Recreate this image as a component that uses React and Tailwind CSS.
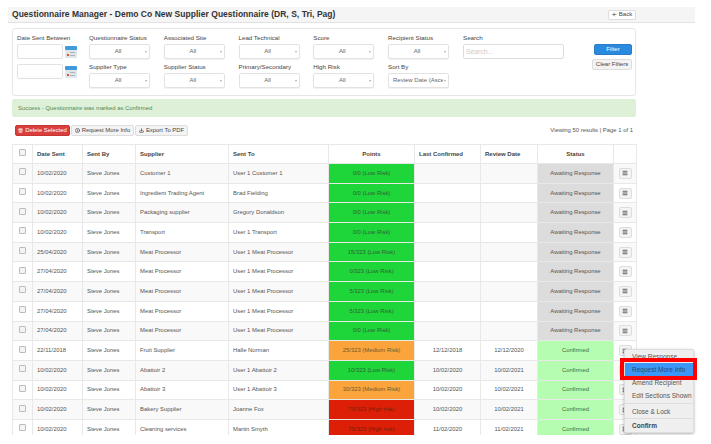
import React from "react";
import { Trash2, Info, Download, Menu, ArrowLeft } from "lucide-react";

const G = "bg-[#1fd63a]", O = "bg-[#fba43c]", R = "bg-[#dc1f06]", A = "bg-[#dcdcdc]", C = "bg-[#b5fdb0]";
const rows = [
  ["10/02/2020","Customer 1","User 1 Customer 1","0/0 (Low Risk)",G,"","","Awaiting Response"],
  ["10/02/2020","Ingredient Trading Agent","Brad Fielding","0/0 (Low Risk)",G,"","","Awaiting Response"],
  ["10/02/2020","Packaging supplier","Gregory Donaldson","0/0 (Low Risk)",G,"","","Awaiting Response"],
  ["10/02/2020","Transport","User 1 Transport","0/0 (Low Risk)",G,"","","Awaiting Response"],
  ["25/04/2020","Meat Processor","User 1 Meat Processor","15/323 (Low Risk)",G,"","","Awaiting Response"],
  ["27/04/2020","Meat Processor","User 1 Meat Processor","0/323 (Low Risk)",G,"","","Awaiting Response"],
  ["27/04/2020","Meat Processor","User 1 Meat Processor","5/323 (Low Risk)",G,"","","Awaiting Response"],
  ["27/04/2020","Meat Processor","User 1 Meat Processor","5/323 (Low Risk)",G,"","","Awaiting Response"],
  ["27/04/2020","Meat Processor","User 1 Meat Processor","0/0 (Low Risk)",G,"","","Awaiting Response"],
  ["22/11/2018","Fruit Supplier","Halle Norman","25/323 (Medium Risk)",O,"12/12/2018","12/12/2020","Confirmed"],
  ["10/02/2020","Abattoir 2","User 1 Abattoir 2","10/323 (Low Risk)",G,"10/02/2020","10/02/2021","Confirmed"],
  ["10/02/2020","Abattoir 3","User 1 Abattoir 3","30/323 (Medium Risk)",O,"10/02/2020","10/02/2021","Confirmed"],
  ["10/02/2020","Bakery Supplier","Joanne Fox","70/323 (High risk)",R,"10/02/2020","10/02/2021","Confirmed"],
  ["10/02/2020","Cleaning services","Martin Smyth","75/323 (High risk)",R,"11/02/2020","11/02/2021","Confirmed"],
];

function Sel({ label, value = "All", left }) {
  return (
    <div className="w-[61px]">
      <div className="h-[12px] text-[6.2px] leading-[12px] text-[#444] whitespace-nowrap">{label}</div>
      <div className="relative h-[15px] rounded-[2px] border border-[#e2e2e2] bg-white shadow-[0_1px_1px_rgba(0,0,0,0.06)] text-[6px] leading-[13px] text-[#666] whitespace-nowrap">
        <div className={left ? "pl-[4px] w-[54px] overflow-hidden" : "text-center pr-[3px]"}>{value}</div>
        <span className="absolute right-[2px] top-[6px] border-x-[1.5px] border-t-[2px] border-x-transparent border-t-[#aaa]" />
      </div>
    </div>
  );
}

function Cal() {
  return (
    <svg width="12" height="14" viewBox="0 0 12 14" className="shrink-0">
      <rect x="0" y="1" width="12" height="12" rx="1" fill="#dfe6ea" />
      <rect x="0" y="1" width="12" height="4" rx="1" fill="#3f9bdc" />
      <rect x="2" y="9" width="2" height="2" fill="#e0503c" />
      <rect x="5" y="7" width="5" height="1" fill="#aab4ba" />
      <rect x="5" y="10" width="5" height="1" fill="#aab4ba" />
    </svg>
  );
}

function Btn({ className = "", children }) {
  return <div className={"flex items-center justify-center gap-[2px] rounded-[2px] border whitespace-nowrap " + className}>{children}</div>;
}

const cols = [20, 50, 53, 93, 100, 86, 66, 57, 76, 23];

export default function App() {
  return (
    <div className="relative w-[711px] h-[435px] overflow-hidden bg-white pt-[7px] text-[#555]" style={{ fontFamily: '"Liberation Sans", Arial, sans-serif' }}>
      <div className="ml-[8px] w-[687px] h-[16px] flex items-center justify-between bg-[#f5f5f5] border-b border-[#e2e2e2] pl-[4px] pr-[59px]">
        <div className="text-[8.5px] font-bold tracking-[0.03px] text-[#333] whitespace-nowrap">Questionnaire Manager - Demo Co New Supplier Questionnaire (DR, S, Tri, Pag)</div>
        <Btn className="w-[28px] h-[10px] bg-white border-[#ddd] text-[6px] text-[#444]"><ArrowLeft size={5} strokeWidth={3} />Back</Btn>
      </div>

      <div className="ml-[12px] mt-[5px] w-[624px] h-[68px] rounded-[3px] border border-[#e6e6e6] flex pl-[4px] pt-[3px]">
        <div className="w-[72px] shrink-0">
          <div className="h-[12px] text-[6.2px] leading-[12px] text-[#444]">Date Sent Between</div>
          <div className="flex items-center gap-[2px]"><div className="w-[46px] h-[15px] rounded-[2px] border border-[#e2e2e2]" /><Cal /></div>
          <div className="mt-[5px] flex items-center gap-[2px]"><div className="w-[46px] h-[15px] rounded-[2px] border border-[#e2e2e2]" /><Cal /></div>
        </div>
        <div className="grid grid-cols-[61px_61px_61px_61px_61px] gap-x-[13.75px] gap-y-[2px] content-start">
          <Sel label="Questionnaire Status" /><Sel label="Associated Site" /><Sel label="Lead Technical" /><Sel label="Score" /><Sel label="Recipient Status" />
          <Sel label="Supplier Type" /><Sel label="Supplier Status" /><Sel label="Primary/Secondary" /><Sel label="High Risk" /><Sel label="Sort By" value="Review Date (Ascending)" left />
        </div>
        <div className="ml-[14px] w-[101px]">
          <div className="h-[12px] text-[6.2px] leading-[12px] text-[#444]">Search</div>
          <div className="h-[15px] rounded-[2px] border border-[#ddd] text-[6.8px] leading-[13px] pl-[2px] text-[#ccc]">Search...</div>
        </div>
        <div className="ml-[28px] w-[40px] pt-[12px] flex flex-col items-end gap-[4px]">
          <Btn className="w-[38px] h-[11px] bg-[#2a8ae0] border-[#2a7cc8] text-white text-[6px]">Filter</Btn>
          <Btn className="w-[40px] h-[11px] bg-[#f3f3f3] border-[#ddd] text-[#444] text-[6px]">Clear Filters</Btn>
        </div>
      </div>

      <div className="ml-[12px] mt-[3px] w-[624px] h-[18px] rounded-[2px] bg-[#dff0d8] pl-[6px] text-[5.9px] leading-[18px] text-[#4f8a4f]">Success - Questionnaire was marked as Confirmed</div>

      <div className="ml-[15px] mr-[78px] mt-[8px] h-[11px] flex items-center gap-[1px]">
        <Btn className="w-[55px] h-[11px] bg-[#d9403d] border-[#c93532] text-white text-[5.9px]"><Trash2 size={5} strokeWidth={3} />Delete Selected</Btn>
        <Btn className="w-[63px] h-[11px] bg-[#f4f4f4] border-[#ddd] text-[#444] text-[5.9px]"><Info size={5} strokeWidth={3} />Request More Info</Btn>
        <Btn className="w-[53px] h-[11px] bg-[#f4f4f4] border-[#ddd] text-[#444] text-[5.9px]"><Download size={5} strokeWidth={3} />Export To PDF</Btn>
        <div className="ml-auto text-[5.9px] text-[#555]">Viewing 50 results | Page 1 of 1</div>
      </div>

      <table className="ml-[12px] mt-[8px] w-[624px] table-fixed border-collapse text-[5.9px] text-[#555]">
        <colgroup>{cols.map((w, i) => <col key={i} style={{ width: w }} />)}</colgroup>
        <thead>
          <tr className="h-[19px] text-[6px] text-[#444]">
            <th className="border border-[#e8e8e8]"><div className="mx-auto -mt-[3px] w-[7px] h-[7px] rounded-[1px] border border-[#bbb] bg-[#f4f4f4]" /></th>
            <th className="border border-[#e8e8e8] text-left pl-[4px] font-bold">Date Sent</th>
            <th className="border border-[#e8e8e8] text-left pl-[4px] font-bold">Sent By</th>
            <th className="border border-[#e8e8e8] text-left pl-[4px] font-bold">Supplier</th>
            <th className="border border-[#e8e8e8] text-left pl-[4px] font-bold">Sent To</th>
            <th className="border border-[#e8e8e8] font-bold">Points</th>
            <th className="border border-[#e8e8e8] text-left pl-[4px] font-bold">Last Confirmed</th>
            <th className="border border-[#e8e8e8] text-left pl-[4px] font-bold">Review Date</th>
            <th className="border border-[#e8e8e8] font-bold">Status</th>
            <th className="border border-[#e8e8e8]" />
          </tr>
        </thead>
        <tbody>
          {rows.map((r, i) => (
            <tr key={i} className={"h-[19.7px] " + (i % 2 === 0 ? "bg-[#f9f9f9]" : "bg-white")}>
              <td className="border border-[#e8e8e8]"><div className="mx-auto -mt-[3px] w-[7px] h-[7px] rounded-[1px] border border-[#bbb] bg-[#f4f4f4]" /></td>
              <td className="border border-[#e8e8e8] pl-[4px]">{r[0]}</td>
              <td className="border border-[#e8e8e8] pl-[4px]">Steve Jones</td>
              <td className="border border-[#e8e8e8] pl-[4px]">{r[1]}</td>
              <td className="border border-[#e8e8e8] pl-[4px]">{r[2]}</td>
              <td className={"border border-[#e8e8e8] text-center " + (r[4] === R ? "text-[#7a1f0e] " : r[4] === O ? "text-[#6b5a30] " : "text-[#2f5f35] ") + r[4]}>{r[3]}</td>
              <td className="border border-[#e8e8e8] text-center">{r[5]}</td>
              <td className="border border-[#e8e8e8] text-center">{r[6]}</td>
              <td className={"border border-[#e8e8e8] text-center " + (r[7] === "Confirmed" ? C + " text-[#3f6f3f]" : A)}>{r[7]}</td>
              <td className="border border-[#e8e8e8]">
                <div className="mx-auto flex items-center justify-center w-[13px] h-[11px] rounded-[2px] border border-[#ddd] bg-[#f4f4f4]"><Menu size={6} strokeWidth={3} className="text-[#333]" /></div>
              </td>
            </tr>
          ))}
        </tbody>
      </table>

      <div className="absolute left-[624px] top-[349px] w-[70px] h-[84px] rounded-[2px] bg-[#efefef] border border-[#ddd] shadow-[0_1px_3px_rgba(0,0,0,0.3)] text-[6.5px] text-[#555] whitespace-nowrap">
        <div className="h-[13px] leading-[13px] pl-[7px]">View Response</div>
        <div className="h-[13px] leading-[13px] pl-[7px] bg-[#3b96f5] text-[#274b70]">Request More Info</div>
        <div className="h-[13px] leading-[13px] pl-[7px]">Amend Recipient</div>
        <div className="h-[13px] leading-[13px] pl-[7px]">Edit Sections Shown</div>
        <div className="mt-[1px] border-t border-[#ddd] h-[15px] leading-[15px] pl-[7px]">Close &amp; Lock</div>
        <div className="border-t border-[#ddd] h-[14px] leading-[14px] pl-[7px] font-bold text-[#444]">Confirm</div>
      </div>
      <div className="absolute left-[620px] top-[358px] w-[77px] h-[22px] border-[4px] border-[#ff0000]" />
    </div>
  );
}
